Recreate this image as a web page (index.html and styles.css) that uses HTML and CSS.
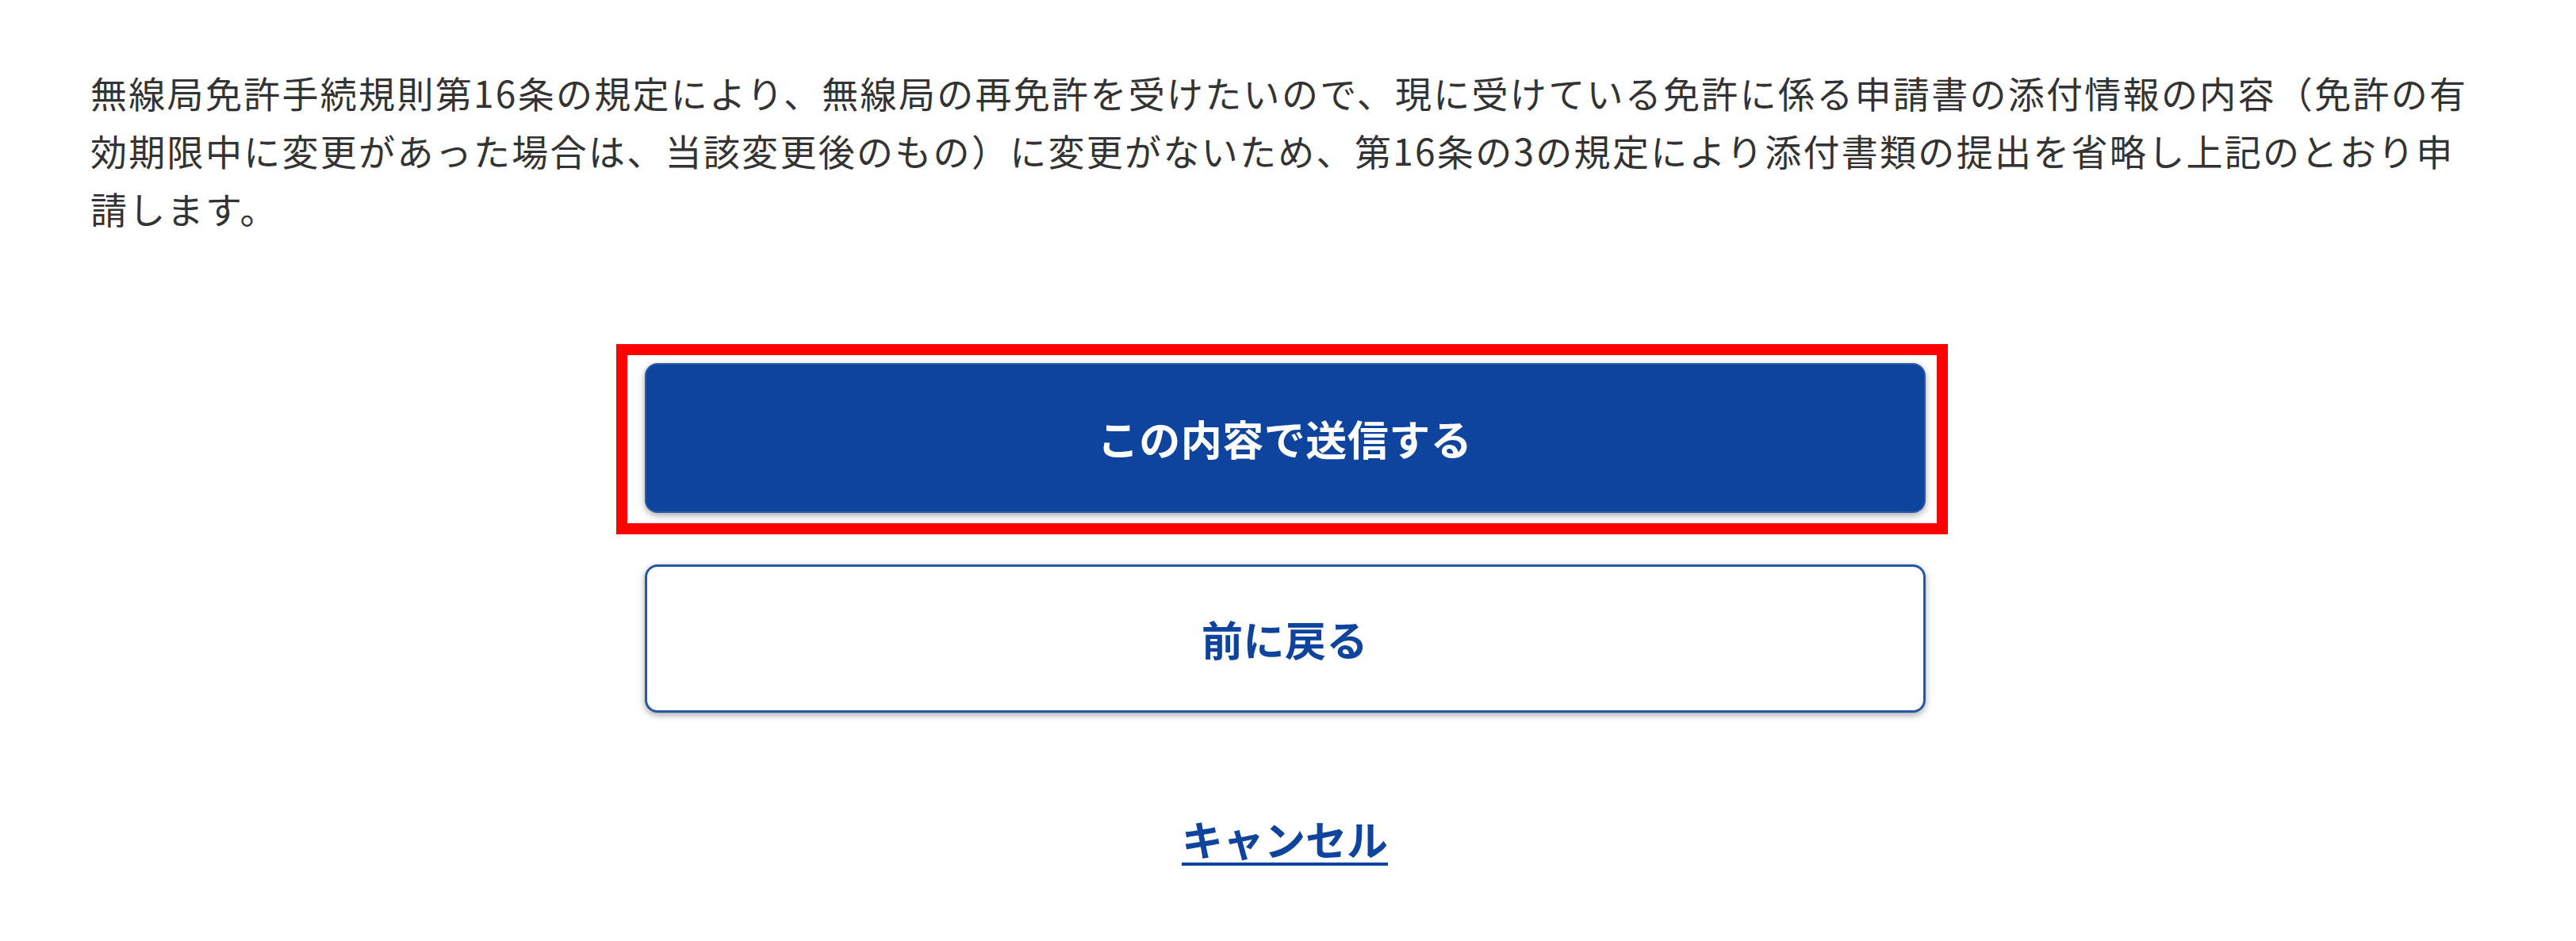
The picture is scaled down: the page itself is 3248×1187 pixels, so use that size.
FILE: index.html
```html
<!DOCTYPE html>
<html lang="ja">
<head>
<meta charset="utf-8">
<title>申請内容の確認</title>
<link rel="stylesheet" href="styles.css">
</head>
<body>
<main class="page">
  <p class="statement">無線局免許手続規則第16条の規定により、無線局の再免許を受けたいので、現に受けている免許に係る申請書の添付情報の内容（免許の有効期限中に変更があった場合は、当該変更後のもの）に変更がないため、第16条の3の規定により添付書類の提出を省略し上記のとおり申請します。</p>
  <div class="actions">
    <div class="highlight-wrap">
      <button class="btn btn-primary" type="button">この内容で送信する</button>
      <span class="highlight" aria-hidden="true"></span>
    </div>
    <button class="btn btn-secondary" type="button">前に戻る</button>
    <a class="cancel" href="#">キャンセル</a>
  </div>
</main>
</body>
</html>
```

FILE: styles.css
```css
html, body {
  margin: 0;
  padding: 0;
  background: #ffffff;
}

body {
  font-family: "Noto Sans CJK JP", "Noto Sans", sans-serif;
  color: #333333;
}

.page {
  box-sizing: border-box;
  width: 3126px;
  padding: 80px 0 0 114px;
}

.statement {
  margin: 0;
  font-size: 46px;
  letter-spacing: 2.3px;
  line-height: 73px;
  color: #333333;
}

.actions {
  display: flex;
  flex-direction: column;
  align-items: center;
  margin-top: 159px;
}

.highlight-wrap {
  position: relative;
}

.btn {
  display: flex;
  align-items: center;
  justify-content: center;
  box-sizing: border-box;
  width: 1615px;
  height: 189px;
  border-radius: 16px;
  font-family: "Noto Sans CJK JP", "Noto Sans", sans-serif;
  font-size: 52px;
  font-weight: 700;
  letter-spacing: 0.5px;
  cursor: pointer;
  box-shadow: 0 3px 8px rgba(0, 0, 0, 0.35);
}

.btn-primary {
  background: #0e449e;
  color: #ffffff;
  border: 2px solid #2a5aa8;
}

.btn-secondary {
  margin-top: 65px;
  height: 187px;
  background: #ffffff;
  color: #0e449e;
  border: 3px solid #2457a8;
}

.highlight {
  position: absolute;
  left: -36px;
  right: -28px;
  top: -24px;
  bottom: -27px;
  border: 14px solid #ff0000;
  pointer-events: none;
}

.cancel {
  margin-top: 120px;
  font-size: 52px;
  font-weight: 700;
  line-height: 78px;
  color: #0e449e;
  text-decoration: underline;
  text-decoration-thickness: 4px;
  text-underline-offset: 8px;
}
```
